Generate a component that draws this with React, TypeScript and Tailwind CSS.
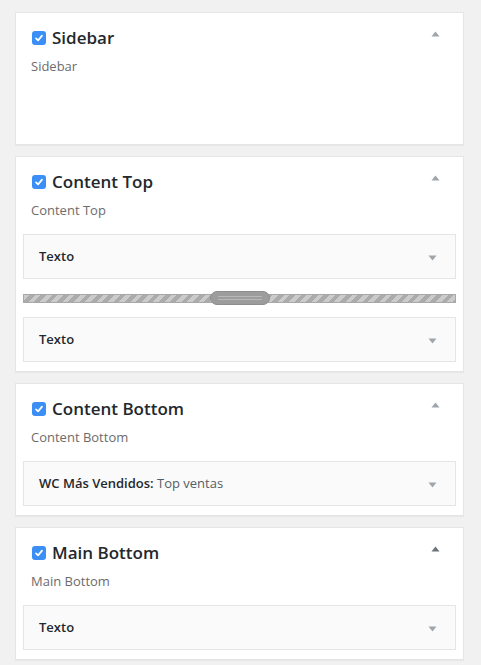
import React from "react";

const Up = ({ dark }: { dark?: boolean }) => (
  <svg width="9" height="6" viewBox="0 0 9 6" className="relative -top-[4px]">
    <path d="M4.5 0.5 L8.5 5.5 L0.5 5.5 Z" fill={dark ? "#6e7378" : "#a0a5aa"} />
  </svg>
);

const Down = () => (
  <svg width="9" height="6" viewBox="0 0 9 6" className="relative top-[1px]">
    <path d="M0.5 0.5 L8.5 0.5 L4.5 5.5 Z" fill="#a0a5aa" />
  </svg>
);

const Check = () => (
  <div className="w-[14px] h-[14px] rounded-[3px] bg-[#3b8ef5] flex items-center justify-center shrink-0">
    <svg width="10" height="10" viewBox="0 0 10 10">
      <path d="M2 5.3 L4.1 7.4 L8 2.6" fill="none" stroke="white" strokeWidth="1.7" strokeLinecap="round" strokeLinejoin="round" />
    </svg>
  </div>
);

const Widget = ({ title, sub }: { title: string; sub?: string }) => (
  <div className="h-[45px] border border-[#e5e5e5] bg-[#fafafa] flex items-center justify-between pl-[15px] pr-[18px]">
    <div className="text-[13px] text-[#23282d]">
      <span className="font-semibold">{title}</span>
      {sub && <span className="text-[#555d66]"> {sub}</span>}
    </div>
    <Down />
  </div>
);

const Separator = () => (
  <div className="h-[38px] flex items-center relative">
    <div className="w-full h-[9px] border border-[#a8a8a8] bg-[repeating-linear-gradient(135deg,#cbcbcb_0px,#cbcbcb_4px,#ababab_4px,#ababab_8px)]" />
    <div className="absolute left-[187px] top-[12px] w-[60px] h-[14px] rounded-full bg-[#9c9c9c] border border-[#8e8e8e] flex flex-col justify-center gap-[2px] px-[7px]">
      <div className="h-px bg-[#b8b8b8]" />
      <div className="h-px bg-[#b8b8b8]" />
    </div>
  </div>
);

const Card = ({
  title,
  dark,
  children,
}: {
  title: string;
  dark?: boolean;
  children?: React.ReactNode;
}) => (
  <div className="border border-[#e5e5e5] bg-white shadow-[0_1px_1px_rgba(0,0,0,0.04)] px-[7px] pb-[9px]">
    <div className="pt-[16px] h-[34px] flex items-center justify-between">
      <div className="flex items-center gap-[6px] pl-[9px]">
        <Check />
        <span className="text-[17px] font-semibold text-[#23282d] leading-[18px]">{title}</span>
      </div>
      <div className="pr-[16px] flex items-center">
        <Up dark={dark} />
      </div>
    </div>
    <div className="mt-[10px] pl-[8px] text-[13px] leading-[18px] text-[#6c6c6c]">{title}</div>
    <div className="mt-[15px]">{children ?? <div className="h-[45px]" />}</div>
  </div>
);

export default function App() {
  return (
    <div className="w-[481px] h-[665px] bg-[#f1f1f1] overflow-hidden font-['Open_Sans',sans-serif]">
      <div className="ml-[15px] w-[449px] pt-[12px] flex flex-col gap-[11px]">
        <Card title="Sidebar" />
        <Card title="Content Top">
          <Widget title="Texto" />
          <Separator />
          <Widget title="Texto" />
        </Card>
        <Card title="Content Bottom">
          <Widget title="WC Más Vendidos:" sub="Top ventas" />
        </Card>
        <Card title="Main Bottom" dark>
          <Widget title="Texto" />
        </Card>
      </div>
    </div>
  );
}
